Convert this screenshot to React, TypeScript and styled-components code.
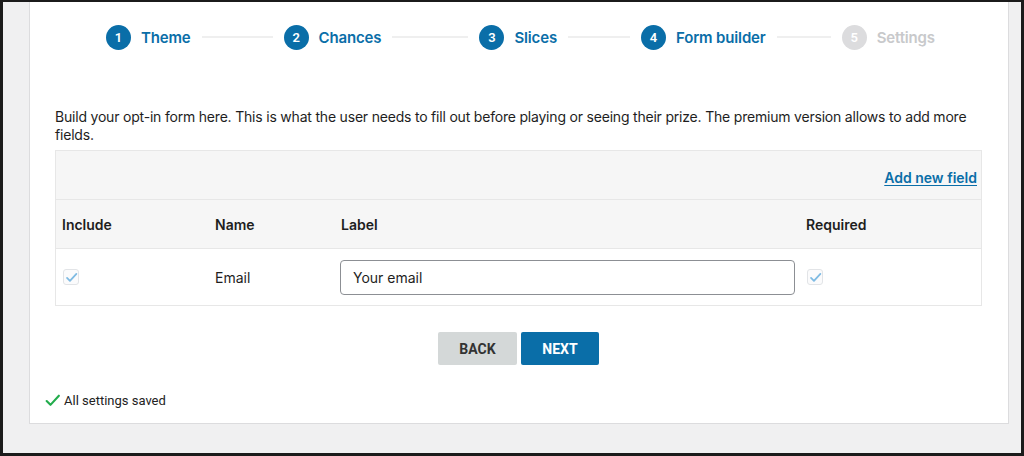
import React from "react";
import styled, { createGlobalStyle } from "styled-components";

const Global = createGlobalStyle`
  html, body { margin: 0; padding: 0; }
  body { font-family: Inter, "Liberation Sans", sans-serif; }
  * { box-sizing: border-box; }
`;

const Frame = styled.div`
  width: 1024px;
  height: 456px;
  border-style: solid;
  border-color: #1b1b1b;
  border-width: 2px 3px 3px 3px;
  background: #f0f0f1;
  padding: 0 12px 29px 26px;
  display: flex;
`;

const Panel = styled.div`
  flex: 1;
  background: #fff;
  border: 1px solid #dcdcde;
  border-top: none;
  padding: 22px 26px 0 25px;
  display: flex;
  flex-direction: column;
`;

const Stepper = styled.div`
  display: flex;
  align-items: center;
  height: 26px;
  padding-left: 51px;
`;

const Step = styled.div`
  display: flex;
  align-items: center;
`;

const Circle = styled.span<{ $off?: boolean }>`
  width: 25px;
  height: 25px;
  border-radius: 50%;
  background: ${(p) => (p.$off ? "#dcdcde" : "#0a6ea8")};
  color: #fff;
  font: 600 13px Roboto, sans-serif;
  display: flex;
  align-items: center;
  justify-content: center;
`;

const StepLabel = styled.span<{ $off?: boolean }>`
  margin-left: 10px;
  font: 600 15px Inter, sans-serif;
  letter-spacing: -0.15px;
  color: ${(p) => (p.$off ? "#c8c9cb" : "#0a6ea8")};
`;

const Connector = styled.span<{ $w: number }>`
  width: ${(p) => p.$w}px;
  height: 2px;
  background: #efefef;
  margin: 0 11px;
`;

const Intro = styled.p`
  margin: 58px 0 6px;
  font: 400 14px/18px Inter, sans-serif;
  letter-spacing: -0.2px;
  color: #1e1e1e;
`;

const Table = styled.div`
  border: 1px solid #e7e7e7;
  border-bottom: none;
`;

const TopRow = styled.div`
  height: 49px;
  background: #f6f6f6;
  border-bottom: 1px solid #e7e7e7;
  display: flex;
  align-items: center;
  justify-content: flex-end;
  padding: 4px 4px 0 0;
`;

const AddLink = styled.a`
  font: 600 14px Inter, sans-serif;
  color: #0a6ea8;
  text-decoration: underline;
  text-underline-offset: 2px;
  cursor: pointer;
`;

const Row = styled.div<{ $head?: boolean }>`
  display: grid;
  grid-template-columns: 153px 126px 465px 1fr;
  align-items: center;
  padding-left: 6px;
  height: ${(p) => (p.$head ? "49px" : "57px")};
  background: ${(p) => (p.$head ? "#f6f6f6" : "#fff")};
  border-bottom: 1px solid #e7e7e7;
  font: ${(p) => (p.$head ? "600" : "400")} 14px Inter, sans-serif;
  color: #1e1e1e;
`;

const Box = styled.span`
  width: 16px;
  height: 16px;
  border: 1px solid #e2e4e7;
  border-radius: 3px;
  background: #fbfbfc;
  display: flex;
  align-items: center;
  justify-content: center;
  margin-left: 1px;
`;

const Input = styled.input`
  width: 455px;
  height: 35px;
  border: 1px solid #8c8f94;
  border-radius: 4px;
  padding: 0 12px;
  margin-left: -1px;
  font: 400 14px Inter, sans-serif;
  color: #1e1e1e;
  background: #fff;
  outline: none;
`;

const Buttons = styled.div`
  display: flex;
  justify-content: center;
  gap: 4px;
  margin-top: 26px;
`;

const Button = styled.button<{ $primary?: boolean }>`
  height: 33px;
  width: ${(p) => (p.$primary ? "78px" : "79px")};
  border: none;
  border-radius: 2px;
  background: ${(p) => (p.$primary ? "#0a6ea8" : "#d4d8d8")};
  color: ${(p) => (p.$primary ? "#fff" : "#333")};
  font: 700 14px Roboto, sans-serif;
  text-transform: uppercase;
  cursor: pointer;
`;

const Status = styled.div`
  display: flex;
  align-items: center;
  gap: 3px;
  margin: 27px 0 0 -11px;
  font: 400 13px Roboto, sans-serif;
  color: #222;
`;

const Check = ({ color, size, w = 1.8 }: { color: string; size: number; w?: number }) => (
  <svg width={size} height={size} viewBox="0 0 16 16" fill="none">
    <path d="M2.5 8.5l3.6 3.6L14 3.5" stroke={color} strokeWidth={w} strokeLinecap="round" strokeLinejoin="round" />
  </svg>
);

const steps = [
  { n: 1, label: "Theme", line: 71 },
  { n: 2, label: "Chances", line: 76 },
  { n: 3, label: "Slices", line: 62 },
  { n: 4, label: "Form builder", line: 54 },
  { n: 5, label: "Settings", line: 0, off: true },
];

export default function App() {
  return (
    <>
      <Global />
      <Frame>
        <Panel>
          <Stepper>
            {steps.map((s) => (
              <Step key={s.n}>
                <Circle $off={s.off}>{s.n}</Circle>
                <StepLabel $off={s.off}>{s.label}</StepLabel>
                {s.line > 0 && <Connector $w={s.line} />}
              </Step>
            ))}
          </Stepper>
          <Intro>
            Build your opt-in form here. This is what the user needs to fill out before playing or seeing their prize. The
            premium version allows to add more fields.
          </Intro>
          <Table>
            <TopRow>
              <AddLink>Add new field</AddLink>
            </TopRow>
            <Row $head>
              <span>Include</span>
              <span>Name</span>
              <span>Label</span>
              <span>Required</span>
            </Row>
            <Row>
              <Box>
                <Check color="#7fbbe3" size={13} w={2.2} />
              </Box>
              <span>Email</span>
              <Input defaultValue="Your email" />
              <Box>
                <Check color="#7fbbe3" size={13} w={2.2} />
              </Box>
            </Row>
          </Table>
          <Buttons>
            <Button>Back</Button>
            <Button $primary>Next</Button>
          </Buttons>
          <Status>
            <Check color="#22ac4c" size={17} w={2} />
            All settings saved
          </Status>
        </Panel>
      </Frame>
    </>
  );
}
